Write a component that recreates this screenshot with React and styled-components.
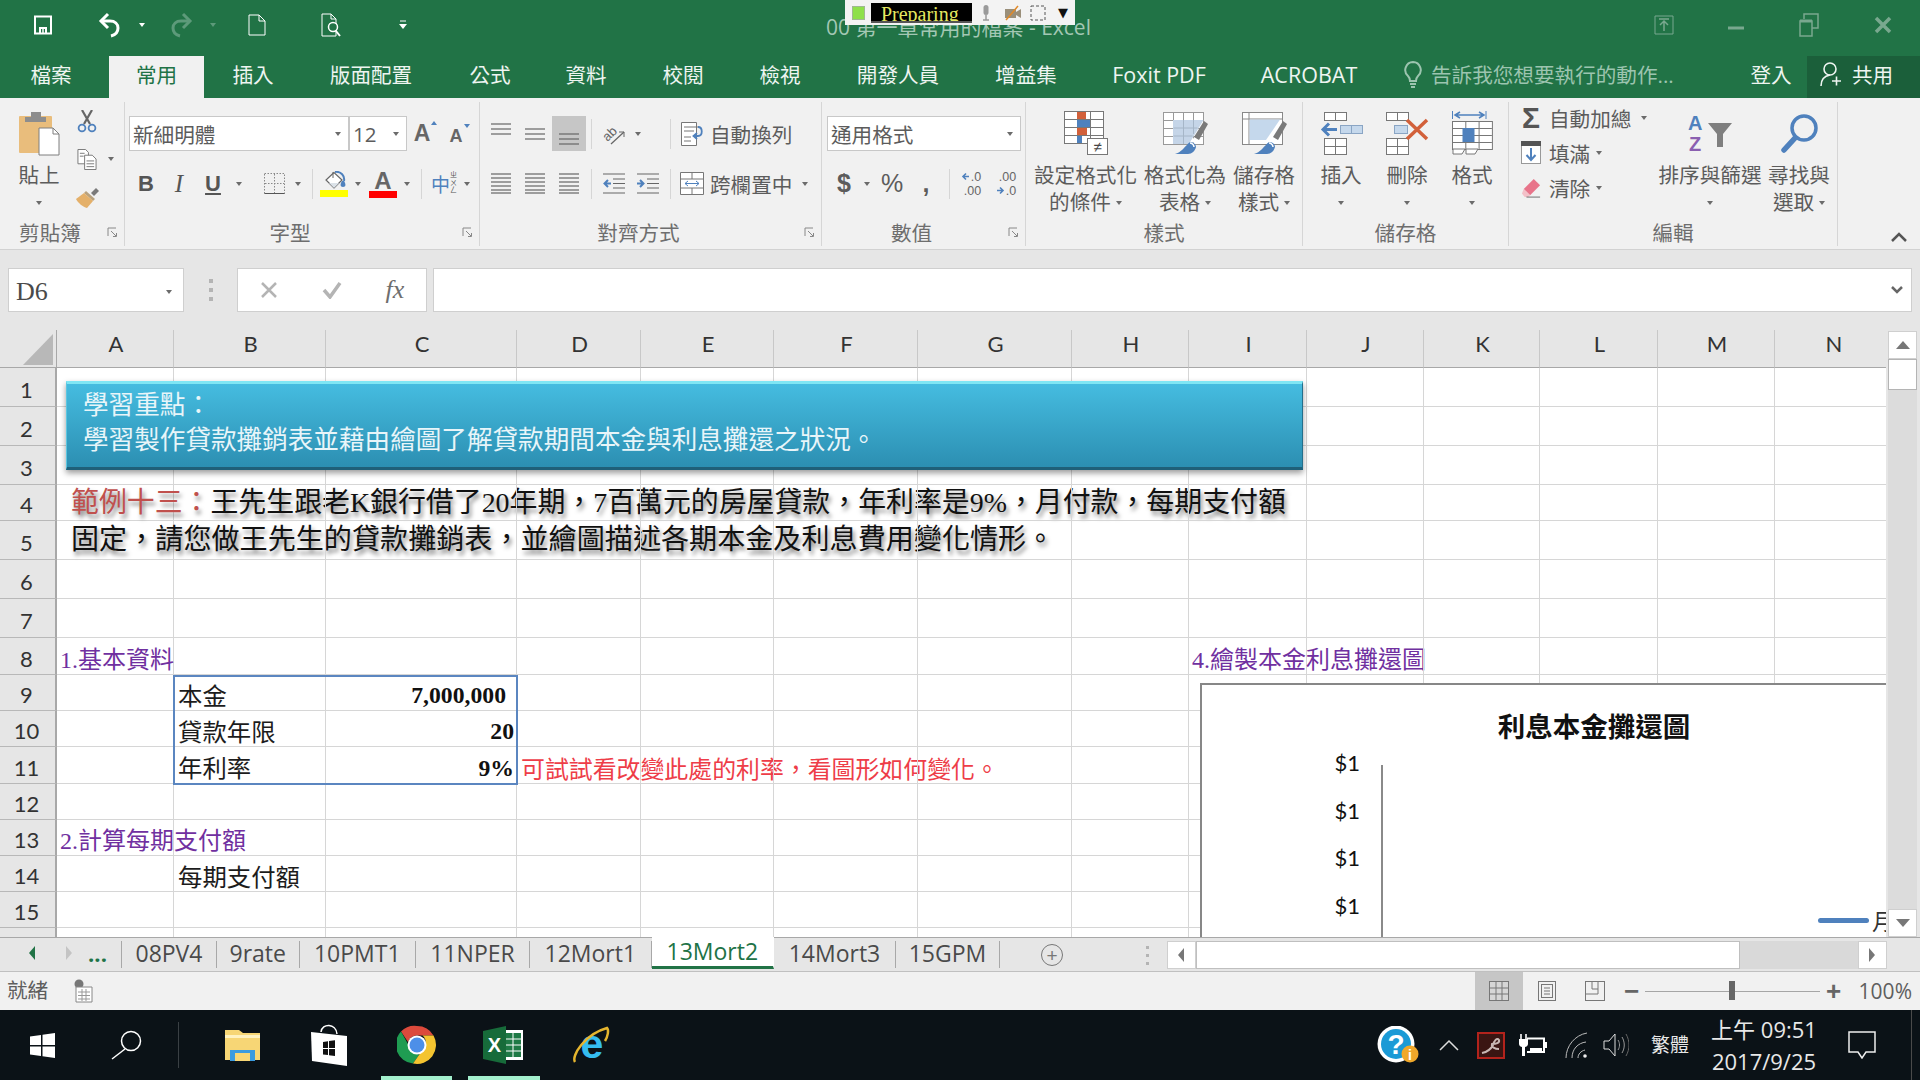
import React from "react";
import styled, { createGlobalStyle, css } from "styled-components";

const UI = '"Open Sans","Noto Sans CJK TC",sans-serif';
const CELL = '"Liberation Serif","Noto Sans CJK TC",serif';
const CALIBRI = 'Lato,"Noto Sans CJK TC",sans-serif';
const BLUE = "#4f81bd";
const ORANGE = "#d2603a";

const COL_NAMES = "ABCDEFGHIJKLMN".split("");
const COL_W = [117, 152, 191, 124, 133, 144, 154, 117, 118, 117, 116, 118, 117, 117];
const ROW_H = [39, 39, 39, 36, 39, 39, 39, 37, 36, 36, 37, 36, 36, 36, 36, 36];

const GlobalStyle = createGlobalStyle`
  html, body { margin: 0; padding: 0; width: 1920px; height: 1080px; overflow: hidden; }
  body { font-family: ${UI}; background: #f1f1f1; }
  * { box-sizing: border-box; }
  svg { display: block; }
`;

const Page = styled.div`
  width: 1920px;
  height: 1080px;
  position: relative;
  overflow: hidden;
`;

/* title bar */
const TitleBar = styled.div`
  height: 56px;
  background: #217346;
  display: flex;
  align-items: flex-start;
`;
const BarSlot = styled.div`
  width: ${(p) => p.$w}px;
  height: 50px;
  margin-left: ${(p) => p.$ml || 0}px;
  display: flex;
  align-items: center;
  justify-content: center;
  flex: none;
`;
const WindowTitle = styled.div`
  margin-left: 394px;
  font-size: 21px;
  line-height: 54px;
  color: #a3c7b4;
  white-space: nowrap;
`;
const WindowControls = styled.div`
  margin-left: auto;
  display: flex;
`;
const Recorder = styled.div`
  position: absolute;
  left: 845px;
  top: 0;
  width: 230px;
  height: 25px;
  background: #f3f3f3;
  display: flex;
  align-items: center;
`;
const RecLed = styled.i`
  width: 13px;
  height: 14px;
  margin-left: 7px;
  background: #8ee04a;
  border: 1px solid #9fb890;
`;
const RecStatus = styled.div`
  margin-left: 6px;
  width: 102px;
  height: 20px;
  background: #000;
  color: #e4e860;
  font: 20px/20px "Liberation Serif", serif;
  padding: 1px 0 0 10px;
  overflow: hidden;
  border-bottom: 2px solid #555;
`;
const RecTool = styled.div`
  width: ${(p) => p.$w}px;
  display: flex;
  justify-content: center;
  font: 13px/1 "DejaVu Sans", sans-serif;
  color: #111;
`;

/* tabs */
const TabRow = styled.div`
  height: 42px;
  background: #217346;
  display: flex;
`;
const Tab = styled.div`
  width: ${(p) => p.$w}px;
  margin-right: ${(p) => p.$mr || 0}px;
  padding-bottom: 6px;
  display: flex;
  align-items: center;
  justify-content: center;
  font-size: ${(p) => (p.$latin ? 21.5 : 20.6)}px;
  white-space: nowrap;
  color: ${(p) => (p.$on ? "#217346" : "#eef5f1")};
  background: ${(p) => (p.$on ? "#f1f1f1" : "transparent")};
`;
const TellMe = styled.div`
  width: 359px;
  padding: 0 0 6px 21px;
  display: flex;
  align-items: center;
  gap: 8px;
  font-size: 20.6px;
  color: #9cc4af;
  white-space: nowrap;
`;
const SignIn = styled(Tab)`
  width: 60px;
  margin-right: 6px;
`;
const Share = styled.div`
  width: 113px;
  background: #1b5f3a;
  display: flex;
  align-items: center;
  padding: 0 0 6px 12px;
  gap: 9px;
  font-size: 20.6px;
  color: #eef5f1;
`;

/* ribbon */
const Ribbon = styled.div`
  height: 152px;
  background: #f1f1f1;
  border-bottom: 1px solid #d2d2d2;
  display: flex;
  align-items: flex-start;
  font-size: 20.6px;
  color: #5c5c5c;
  position: relative;
`;
const Group = styled.div`
  width: ${(p) => p.$w}px;
  height: 144px;
  margin-top: 4px;
  border-right: 1px solid #d6d6d6;
  display: flex;
  flex-direction: column;
  flex: none;
`;
const GroupBody = styled.div`
  height: 114px;
  flex: none;
  display: ${(p) => (p.$row ? "flex" : "block")};
`;
const GroupFoot = styled.div`
  flex: 1;
  display: flex;
  align-items: center;
  padding-top: 1px;
  color: #6e6e6e;
  font-size: 20.6px;
`;
const FootLabel = styled.div`
  flex: 1;
  text-align: center;
`;
const Launcher = styled.div`
  width: 24px;
  display: flex;
  justify-content: center;
`;
const ToolRow = styled.div`
  height: 35px;
  margin-top: 14px;
  padding-left: ${(p) => p.$pl || 0}px;
  display: flex;
  align-items: center;
  & + & {
    margin-top: 15px;
  }
`;
const Slot = styled.div`
  width: ${(p) => p.$w}px;
  height: 35px;
  margin-left: ${(p) => p.$ml || 0}px;
  flex: none;
  display: flex;
  align-items: center;
  justify-content: center;
  background: ${(p) => (p.$on ? "#c6c6c6" : "transparent")};
`;
const Caret = styled.i`
  display: block;
  flex: none;
  width: 0;
  height: 0;
  margin-left: ${(p) => p.$ml || 0}px;
  border-left: 3.5px solid transparent;
  border-right: 3.5px solid transparent;
  border-top: 4px solid ${(p) => p.$c || "#6b6b6b"};
`;
const Sep = styled.div`
  width: 1px;
  height: 30px;
  background: #d6d6d6;
`;
const ComboBox = styled.div`
  width: ${(p) => p.$w}px;
  height: 35px;
  background: #fff;
  border: 1px solid #c8c8c8;
  display: flex;
  align-items: center;
  justify-content: space-between;
  padding: 0 7px 0 3px;
  flex: none;
  font-size: 20.6px;
  color: #5c5c5c;
`;
const Letter = styled.span`
  font: ${(p) => (p.$i ? "italic 400" : "700")} ${(p) => p.$s || 22}px ${(p) => (p.$i ? '"Liberation Serif"' : '"Liberation Sans"')}, sans-serif;
  color: #555;
  text-decoration: ${(p) => (p.$u ? "underline" : "none")};
  text-underline-offset: 2px;
`;
const SizeLetter = styled.span`
  position: relative;
  top: ${(p) => p.$top || 0}px;
  font: 700 ${(p) => p.$s}px/1 "Liberation Sans", sans-serif;
  color: #666;
`;
const LetterMark = styled.i`
  position: absolute;
  top: ${(p) => (p.$up ? -1 : -3)}px;
  right: -7px;
  border-left: 3.5px solid transparent;
  border-right: 3.5px solid transparent;
  ${(p) => (p.$up ? `border-bottom: 4px solid ${BLUE};` : `border-top: 4px solid ${BLUE};`)}
`;
const ColorTool = styled.div`
  width: 28px;
  display: flex;
  flex-direction: column;
  align-items: center;
`;
const ColorBar = styled.div`
  width: 28px;
  height: 7px;
  background: ${(p) => p.$c};
`;
const ColorLetter = styled.span`
  font: 700 24px/21px "Liberation Sans", sans-serif;
  color: #666;
`;
const PhoneticMain = styled.span`
  font-size: 19px;
  color: ${BLUE};
  line-height: 1;
  margin-top: 4px;
`;
const PhoneticSmall = styled.span`
  font-size: 7px;
  line-height: 7.5px;
  color: #555;
  width: 7px;
  word-break: break-all;
  margin-top: -2px;
`;
const ToolText = styled.span`
  margin-left: ${(p) => p.$ml || 0}px;
  white-space: nowrap;
`;
const NumberGlyph = styled.span`
  font: ${(p) => (p.$b ? "700" : "400")} ${(p) => p.$s || 25}px "Liberation Sans", sans-serif;
  color: #5c5c5c;
`;
const DecimalIcon = styled.div`
  font: 12.5px/14px "Liberation Sans", sans-serif;
  color: #666;
  white-space: nowrap;
  display: flex;
  flex-direction: column;
  align-items: flex-end;
`;
const DecimalLine = styled.span`
  display: flex;
  align-items: center;
  gap: 1px;
`;
const ClipCol = styled.div`
  width: ${(p) => p.$w}px;
  display: flex;
  flex-direction: column;
  align-items: center;
  flex: none;
`;
const PasteIcon = styled.div`
  margin-top: 9px;
`;
const BigLabel = styled.div`
  line-height: 27px;
  margin-top: ${(p) => p.$mt || 0}px;
  white-space: nowrap;
  height: 27px;
  display: flex;
  align-items: center;
  gap: 5px;
`;
const ClipRow = styled.div`
  height: 38px;
  display: flex;
  align-items: center;
  width: 100%;
`;
const BigButton = styled.div`
  width: ${(p) => p.$w}px;
  padding-top: 7px;
  display: flex;
  flex-direction: column;
  align-items: center;
  flex: none;
`;
const BigIcon = styled.div`
  height: 48px;
  margin-bottom: 5px;
  display: flex;
  align-items: center;
  justify-content: center;
`;
const SmallStack = styled.div`
  width: 156px;
  flex: none;
`;
const SmallButton = styled.div`
  height: 35px;
  display: flex;
  align-items: center;
  padding-left: 12px;
  white-space: nowrap;
  &:first-child {
    margin-top: -2px;
  }
`;
const SmallIcon = styled.div`
  width: 20px;
  display: flex;
  justify-content: center;
  margin-right: 8px;
`;
const Sigma = styled.span`
  font: bold 30px/1 "Liberation Sans", sans-serif;
  color: #555;
`;
const Collapse = styled.div`
  position: absolute;
  right: 12px;
  bottom: 6px;
`;

/* formula bar */
const FormulaBar = styled.div`
  height: 80px;
  background: #e6e6e6;
  display: flex;
  align-items: flex-start;
  padding: 18px 8px 0 8px;
`;
const NameBox = styled.div`
  width: 176px;
  height: 44px;
  background: #fff;
  border: 1px solid #cfcfcf;
  display: flex;
  align-items: center;
  justify-content: space-between;
  padding: 4px 11px 0 7px;
  font: 26px "Liberation Serif", serif;
  color: #4a4a4a;
`;
const GripDots = styled.div`
  width: 53px;
  height: 44px;
  display: flex;
  flex-direction: column;
  align-items: center;
  justify-content: center;
  gap: 5px;
  i {
    width: 4px;
    height: 4px;
    background: #b4b4b4;
  }
`;
const FxBox = styled.div`
  width: 190px;
  height: 44px;
  background: #fff;
  border: 1px solid #cfcfcf;
  display: flex;
  align-items: center;
`;
const FxSlot = styled.div`
  width: ${(p) => p.$w}px;
  display: flex;
  justify-content: center;
`;
const FxText = styled.span`
  font: italic 26px "Liberation Serif", serif;
  color: #6e6e6e;
`;
const FormulaInput = styled.div`
  flex: 1;
  height: 44px;
  margin-left: 6px;
  background: #fff;
  border: 1px solid #cfcfcf;
  display: flex;
  align-items: center;
  justify-content: flex-end;
  padding-right: 8px;
`;

/* sheet */
const SheetRow = styled.div`
  height: 607px;
  display: flex;
`;
const Sheet = styled.div`
  width: 1886px;
  height: 607px;
  position: relative;
  overflow: hidden;
  background: #fff;
  display: grid;
  grid-template-columns: 57px ${COL_W.map((w) => `${w}px`).join(" ")};
  grid-template-rows: 38px ${ROW_H.map((h) => `${h}px`).join(" ")};
`;
const Corner = styled.div`
  background: #e6e6e6;
  border-right: 1px solid #a8a8a8;
  border-bottom: 1px solid #a8a8a8;
  display: flex;
  justify-content: flex-end;
  align-items: flex-end;
  padding: 0 3px 2px 0;
`;
const CornerMark = styled.div`
  width: 30px;
  height: 31px;
  background: #b8b8b8;
  clip-path: polygon(100% 0, 100% 100%, 0 100%);
`;
const ColHead = styled.div`
  background: #e6e6e6;
  border-right: 1px solid #c8c8c8;
  border-bottom: 1px solid #a8a8a8;
  font: 22px/28px ${CALIBRI};
  color: #333;
  text-align: center;
  padding: 0 0 10px 2px;
`;
const RowHead = styled.div`
  background: #e6e6e6;
  border-right: 2px solid #a8a8a8;
  border-bottom: 1px solid #b8b8b8;
  font: 22px/1 ${CALIBRI};
  color: #333;
  display: flex;
  align-items: center;
  justify-content: center;
  padding: 5px 2px 0 0;
`;
const kinds = {
  plain: css`
    padding-left: 4px;
    padding-top: 9px;
    font-size: 24.4px;
    color: #1c1c1c;
  `,
  purple: css`
    padding-left: 3px;
    padding-top: 7px;
    font-size: 24px;
    color: #7030a0;
  `,
  note: css`
    padding-left: 4px;
    padding-top: 11px;
    font-size: 23.9px;
    color: #ee3d48;
  `,
  value: css`
    justify-content: flex-end;
    padding-right: ${(p) => p.$pr || 2}px;
    padding-top: 7px;
    font-weight: 700;
    font-size: 23.7px;
    color: #111;
  `,
  example: css`
    padding-left: 14px;
    font-size: 27.9px;
    color: #111;
    text-shadow: 2px 4px 4px rgba(0, 0, 0, 0.5);
  `,
  exampleWide: css`
    padding-left: 14px;
    font-size: 28.1px;
    color: #111;
    text-shadow: 2px 4px 4px rgba(0, 0, 0, 0.5);
  `,
};
const Cell = styled.div`
  border-right: 1px solid #d6d6d6;
  border-bottom: 1px solid #d6d6d6;
  font-family: ${CELL};
  line-height: 1;
  white-space: nowrap;
  display: flex;
  align-items: center;
  min-width: 0;
  min-height: 0;
  ${(p) => p.$kind && kinds[p.$kind]}
`;
const Red = styled.span`
  color: #c0504d;
`;
const Banner = styled.div`
  position: absolute;
  left: 66px;
  top: 51px;
  width: 1237px;
  height: 89px;
  padding: 4px 0 0 16px;
  background: linear-gradient(#45bce0, #2c8fb2);
  border-top: 3px solid #7fe6f4;
  border-bottom: 3px solid #1f6079;
  border-left: 1px solid #5cc6e0;
  border-right: 1px solid #236f8c;
  box-shadow: 0 3px 6px rgba(0, 0, 0, 0.4);
  font: 25.6px/35px ${CELL};
  color: #e8f5f9;
  white-space: nowrap;
`;
const Picked = styled.div`
  position: absolute;
  left: 173px;
  top: 345px;
  width: 345px;
  height: 110px;
  border: 2px solid #5b86c0;
`;
const Chart = styled.div`
  position: absolute;
  left: 1200px;
  top: 353px;
  width: 788px;
  height: 400px;
  background: #fff;
  border: 2px solid #878787;
`;
const ChartTitle = styled.div`
  padding-top: 20px;
  height: 61px;
  text-align: center;
  font: bold 27.5px/40px "Noto Sans CJK TC", sans-serif;
  color: #111;
`;
const Plot = styled.div`
  display: flex;
`;
const AxisLabels = styled.div`
  width: 158px;
  display: flex;
  flex-direction: column;
  gap: 13.5px;
  text-align: right;
  font: 22px/34px ${CALIBRI};
  color: #111;
`;
const Axis = styled.div`
  width: 2px;
  height: 300px;
  margin: 19px 0 0 21px;
  background: #8a8a8a;
`;
const Legend = styled.div`
  position: absolute;
  left: 616px;
  top: 218px;
  display: flex;
  align-items: center;
  gap: 3px;
  font: 23px "Noto Sans CJK TC", sans-serif;
  color: #333;
`;
const LegendLine = styled.i`
  width: 51px;
  height: 5px;
  border-radius: 3px;
  background: ${BLUE};
`;

/* scrollbars */
const VScroll = styled.div`
  flex: 1;
  background: #e6e6e6;
  padding: 1px 3px 0 2px;
  display: flex;
  flex-direction: column;
`;
const ScrollBtn = styled.div`
  width: ${(p) => p.$w || 29}px;
  height: ${(p) => p.$h || 28}px;
  background: #fff;
  border: 1px solid #cfcfcf;
  display: flex;
  align-items: center;
  justify-content: center;
  flex: none;
`;
const VThumb = styled.div`
  height: 31px;
  background: #fff;
  border: 1px solid #b4b4b4;
  flex: none;
`;
const VTrack = styled.div`
  flex: 1;
  background: #dcdcdc;
`;
const Filler = styled.div`
  flex: 1;
`;
const Arrow = styled.i`
  display: block;
  ${(p) =>
    p.$d === "up" &&
    css`
      border-left: 7px solid transparent;
      border-right: 7px solid transparent;
      border-bottom: 8px solid ${p.$c || "#777"};
    `}
  ${(p) =>
    p.$d === "down" &&
    css`
      border-left: 7px solid transparent;
      border-right: 7px solid transparent;
      border-top: 8px solid ${p.$c || "#777"};
    `}
  ${(p) =>
    p.$d === "left" &&
    css`
      border-top: 7px solid transparent;
      border-bottom: 7px solid transparent;
      border-right: 6px solid ${p.$c || "#777"};
    `}
  ${(p) =>
    p.$d === "right" &&
    css`
      border-top: 7px solid transparent;
      border-bottom: 7px solid transparent;
      border-left: 6px solid ${p.$c || "#777"};
    `}
`;

/* sheet tabs */
const TabStrip = styled.div`
  height: 35px;
  background: #e6e6e6;
  border-top: 1px solid #a8a8a8;
  border-bottom: 1px solid #c0c0c0;
  display: flex;
  align-items: flex-start;
`;
const NavSlot = styled.div`
  width: ${(p) => p.$w}px;
  height: 30px;
  display: flex;
  align-items: center;
  justify-content: center;
  color: #217346;
  font: bold 22px/1 ${UI};
`;
const SheetTab = styled.div`
  width: ${(p) => p.$w}px;
  flex: none;
  height: ${(p) => (p.$on ? 32 : 27)}px;
  margin-top: ${(p) => (p.$on ? -1 : 3)}px;
  border-right: 1px solid ${(p) => (p.$on ? "transparent" : "#a8a8a8")};
  border-left: ${(p) => (p.$first ? "1px solid #a8a8a8" : "none")};
  background: ${(p) => (p.$on ? "#fff" : "transparent")};
  border-bottom: ${(p) => (p.$on ? "3px solid #217346" : "none")};
  color: ${(p) => (p.$on ? "#217346" : "#4a4a4a")};
  font-size: 23px;
  line-height: 1;
  display: flex;
  align-items: ${(p) => (p.$on ? "flex-start" : "center")};
  padding-top: ${(p) => (p.$on ? 3 : 0)}px;
  padding-bottom: ${(p) => (p.$on ? 0 : 2)}px;
  justify-content: center;
  white-space: nowrap;
`;
const AddSheet = styled.div`
  margin-left: 41px;
  margin-top: 6px;
  width: 22px;
  height: 22px;
  border: 1px solid #777;
  border-radius: 50%;
  color: #777;
  display: flex;
  align-items: center;
  justify-content: center;
  font: 19px/1 "Liberation Sans", sans-serif;
  flex: none;
`;
const TabGrip = styled(GripDots)`
  width: 8px;
  height: 28px;
  margin: 3px 0 0 81px;
  flex: none;
  i {
    width: 3px;
    height: 3px;
  }
`;
const HScroll = styled.div`
  width: 720px;
  height: 28px;
  margin: 3px 0 0 15px;
  background: #d9d9d9;
  display: flex;
  flex: none;
`;
const HThumb = styled.div`
  width: 544px;
  height: 28px;
  background: #fff;
  border: 1px solid #bfbfbf;
`;

/* status bar */
const StatusBar = styled.div`
  height: 38px;
  background: #f1f1f1;
  display: flex;
  align-items: center;
  padding-left: 7px;
  font-size: 20.6px;
  color: #5e5e5e;
`;
const StatusLabel = styled.span`
  margin-top: -4px;
`;
const StatusRight = styled.div`
  margin-left: auto;
  height: 38px;
  display: flex;
  align-items: center;
`;
const ViewBtn = styled.div`
  width: 48px;
  height: 38px;
  display: flex;
  align-items: center;
  justify-content: center;
  background: ${(p) => (p.$on ? "#c6c6c6" : "transparent")};
`;
const ZoomSign = styled.div`
  width: ${(p) => p.$w}px;
  text-align: center;
  font: bold 26px/1 "Liberation Sans", sans-serif;
  color: #666;
`;
const ZoomTrack = styled.div`
  width: 175px;
  height: 20px;
  display: flex;
  justify-content: center;
  background: linear-gradient(#a6a6a6, #a6a6a6) center / 100% 1px no-repeat;
`;
const ZoomThumb = styled.i`
  width: 6px;
  height: 19px;
  background: #666;
`;
const ZoomText = styled.div`
  margin: 0 8px 0 11px;
  font-size: 21px;
  white-space: nowrap;
`;

/* taskbar */
const Taskbar = styled.div`
  height: 70px;
  background: #0b1217;
  display: flex;
  align-items: center;
  color: #eee;
`;
const TaskItem = styled.div`
  position: relative;
  width: ${(p) => p.$w || 72}px;
  height: 70px;
  margin-left: ${(p) => p.$ml || 0}px;
  display: flex;
  align-items: center;
  justify-content: center;
  flex: none;
  ${(p) =>
    p.$on &&
    css`
      &::after {
        content: "";
        position: absolute;
        left: 0;
        right: 0;
        bottom: 0;
        height: 4px;
        background: #a3f0cd;
      }
    `}
`;
const TaskSep = styled.div`
  width: 1px;
  height: 46px;
  margin: 0 27px 0 10px;
  background: #3a4044;
`;
const Tray = styled.div`
  margin-left: auto;
  margin-right: 22px;
  display: flex;
`;
const TrayText = styled.div`
  font-size: 19px;
  line-height: 24px;
  text-align: center;
  white-space: nowrap;
  color: #e8e8e8;
`;
const Clock = styled.div`
  display: flex;
  flex-direction: column;
  align-items: center;
  gap: 4px;
  font-size: 22px;
  line-height: 28px;
  color: #e8e8e8;
  white-space: nowrap;
`;
const EdgeLine = styled.div`
  position: absolute;
  right: 8px;
  bottom: 0;
  height: 70px;
  width: 1px;
  background: #4a4a4a;
`;

/* drawings */
const Ico = ({ w, h, children }) => (
  <svg width={w} height={h} viewBox={`0 0 ${w} ${h}`} fill="none">
    {children}
  </svg>
);

const SaveIcon = () => (
  <Ico w={20} h={20}>
    <path d="M2 1.500h16v17H2z" stroke="#fff" strokeWidth="2" />
    <path d="M7 18v-5h6v5" stroke="#fff" strokeWidth="2" />
    <path d="M10 14v4" stroke="#fff" strokeWidth="1.500" />
  </Ico>
);
const UndoIcon = ({ c = "#fff" }) => (
  <Ico w={24} h={26}>
    <path d="M10 2 3 9l7 7" stroke={c} strokeWidth="3" />
    <path d="M4 9h8c5 0 8 3 8 7s-3 7-7 8" stroke={c} strokeWidth="3" />
  </Ico>
);
const RedoIcon = ({ c }) => (
  <Ico w={24} h={26}>
    <path d="m14 2 7 7-7 7" stroke={c} strokeWidth="3" />
    <path d="M20 9h-8c-5 0-8 3-8 7s3 7 7 8" stroke={c} strokeWidth="3" />
  </Ico>
);
const NewIcon = () => (
  <Ico w={18} h={22}>
    <path d="M1 1h10l6 6v14H1z" stroke="#fff" />
    <path d="M11 1v6h6" stroke="#fff" />
  </Ico>
);
const PreviewIcon = () => (
  <Ico w={24} h={24}>
    <path d="M2 1h9l5 5v17H2z" stroke="#fff" />
    <path d="M11 1v5h5" stroke="#fff" />
    <circle cx="13" cy="14" r="4.500" stroke="#fff" strokeWidth="1.500" fill="#217346" />
    <path d="m16 18 4 5" stroke="#fff" strokeWidth="2" />
  </Ico>
);
const QatMore = () => (
  <Ico w={10} h={12}>
    <path d="M2 2h6" stroke="#fff" />
    <path d="M1 5h8L5 10z" fill="#fff" />
  </Ico>
);
const RibbonOptIcon = () => (
  <Ico w={20} h={20}>
    <path d="M1 1h18v18H1z" stroke="#79a88f" />
    <path d="M5 4h10M10 6v10M6 10l4-4 4 4" stroke="#79a88f" strokeWidth="1.500" />
  </Ico>
);
const MinIcon = () => (
  <Ico w={18} h={18}>
    <path d="M1 12h16" stroke="#79a88f" strokeWidth="3" />
  </Ico>
);
const RestoreIcon = () => (
  <Ico w={20} h={24}>
    <path d="M5 6V1h14v14h-6" stroke="#79a88f" strokeWidth="1.500" />
    <path d="M1 8h12v15H1z" stroke="#79a88f" strokeWidth="1.500" />
    <path d="M1 8h12" stroke="#79a88f" strokeWidth="3" />
  </Ico>
);
const CloseIcon = () => (
  <Ico w={18} h={18}>
    <path d="m2 2 14 14M16 2 2 16" stroke="#79a88f" strokeWidth="3.500" />
  </Ico>
);
const MicIcon = () => (
  <Ico w={10} h={17}>
    <rect x="2.500" y="1" width="5" height="10" rx="2.500" fill="#9a9a9a" />
    <path d="M5 11v5M2 16h6" stroke="#9a9a9a" strokeWidth="1.500" />
  </Ico>
);
const CamIcon = () => (
  <Ico w={18} h={16}>
    <rect x="1" y="4" width="11" height="9" fill="#9a8f7a" />
    <path d="m12 7 5-3v9l-5-3z" fill="#9a8f7a" />
    <path d="m2 15 12-14" stroke="#e08a2a" strokeWidth="1.500" />
  </Ico>
);
const RegionIcon = () => (
  <Ico w={16} h={16}>
    <rect x="1" y="1" width="14" height="14" stroke="#555" strokeDasharray="3 2" />
  </Ico>
);
const BulbIcon = () => (
  <Ico w={20} h={28}>
    <path d="M10 2a8 8 0 0 0-5 14c1 1 2 3 2 5h6c0-2 1-4 2-5a8 8 0 0 0-5-14z" stroke="#9cc4af" strokeWidth="2" />
    <path d="M7 24h6M8 27h4" stroke="#9cc4af" strokeWidth="2" />
  </Ico>
);
const ShareIcon = () => (
  <Ico w={24} h={26}>
    <circle cx="11" cy="8" r="6" stroke="#eef5f1" strokeWidth="1.600" />
    <path d="M2 25c0-6 3-10 9-11" stroke="#eef5f1" strokeWidth="1.600" />
    <path d="M13 20h9M17.500 15.500v9" stroke="#eef5f1" strokeWidth="1.600" />
  </Ico>
);

const PasteGlyph = () => (
  <Ico w={41} h={45}>
    <rect y="5" width="33" height="37" rx="1" fill="#e9bd7c" />
    <path d="M6 6h21v5H6z" fill="#8d8d8d" />
    <path d="M12 1h10v5H12z" fill="#8d8d8d" />
    <path d="M20 17h14l6 6v21H20z" fill="#fff" stroke="#7f7f7f" />
    <path d="M34 17v6h6" stroke="#7f7f7f" />
  </Ico>
);
const ScissorsGlyph = () => (
  <Ico w={20} h={23}>
    <path d="M15 0 7 14M5 0l8 14" stroke="#666" strokeWidth="2.200" />
    <circle cx="5" cy="18" r="3.400" stroke={BLUE} strokeWidth="1.800" />
    <circle cx="15" cy="18" r="3.400" stroke={BLUE} strokeWidth="1.800" />
  </Ico>
);
const CopyGlyph = () => (
  <Ico w={21} h={23}>
    <path d="M1 1h8l3 3v12H1z" fill="#fff" stroke="#777" />
    <path d="M8 7h8l4 4v11H8z" fill="#fff" stroke="#777" />
    <path d="M10 13h8M10 16h8M10 19h8M3 5h5M3 8h4" stroke="#777" />
  </Ico>
);
const BrushGlyph = () => (
  <Ico w={24} h={21}>
    <path d="M16 6 21 1l3 3-5 5z" fill="#7a7a7a" />
    <path d="M11 4l9 8-2 2-9-8z" fill="#b9a27e" />
    <path d="M9 6l9 8-6 7c-4-1-9-5-11-9z" fill="#e4b06a" />
  </Ico>
);
const LauncherGlyph = () => (
  <Ico w={11} h={11}>
    <path d="M1 9V1h8" stroke="#888" />
    <path d="m4 4 5 5M6 9.500h3.500V6" stroke="#888" />
  </Ico>
);
const BorderGlyph = () => (
  <Ico w={21} h={21}>
    <path d="M.5.500h20v20H.5z" stroke="#888" strokeDasharray="1.500 1.500" />
    <path d="M10.500 1v19M1 10.500h19" stroke="#888" strokeDasharray="1.500 1.500" />
    <path d="M.5 20.500h20" stroke="#555" />
  </Ico>
);
const BucketGlyph = () => (
  <Ico w={28} h={19}>
    <path d="M14 1.500 6 9l8 8 8-8z" fill="#fff" stroke="#666" strokeWidth="1.200" />
    <path d="M13 1v6" stroke="#666" />
    <path d="M15 1c6-1 10 4 9 9" stroke={BLUE} strokeWidth="2" />
    <path d="M22 10c-2 3-2 6 1 6s3-3 1-6z" fill={BLUE} />
    <path d="M9 12h10l-5 5z" fill="#dbe2e8" />
  </Ico>
);
const AlignV = ({ y }) => (
  <Ico w={20} h={30}>
    {y.map((v) => (
      <path key={v} d={`M0 ${v}h20`} stroke="#666" strokeWidth="1.200" />
    ))}
  </Ico>
);
const AlignH = () => (
  <Ico w={20} h={21}>
    {[1, 5, 9, 13, 17, 20].map((v) => (
      <path key={v} d={`M0 ${v}h20`} stroke="#666" strokeWidth="1.200" />
    ))}
  </Ico>
);
const OrientGlyph = () => (
  <Ico w={22} h={22}>
    <text x="0" y="16" fontSize="13" fill="#666" transform="rotate(-45 6 12)" fontFamily="Liberation Sans">
      ab
    </text>
    <path d="M8 21 21 9" stroke="#666" strokeWidth="1.200" />
    <path d="M21 9v5M21 9h-5" stroke="#666" />
  </Ico>
);
const IndentGlyph = ({ rev }) => (
  <Ico w={24} h={21}>
    <path d="M1 1h22M1 20h22M11 6h12M11 10.500h12M11 15h12" stroke="#666" strokeWidth="1.200" />
    {rev ? (
      <path d="M9 10.500H3M6 7l-3.500 3.500L6 14" stroke={BLUE} strokeWidth="2" />
    ) : (
      <path d="M1 10.500h6M4 7l3.500 3.500L4 14" stroke={BLUE} strokeWidth="2" />
    )}
  </Ico>
);
const WrapGlyph = () => (
  <Ico w={23} h={24}>
    <path d="M.5.500h15v23H.5z" fill="#fff" stroke="#777" />
    <path d="M3 5h15M3 9h10M3 15h7M3 19h7" stroke="#777" />
    <path d="M17 5c5 0 5 9 0 9h-4M16 11l-3.500 3 3.500 3" stroke={BLUE} strokeWidth="1.800" />
  </Ico>
);
const MergeGlyph = () => (
  <Ico w={24} h={23}>
    <path d="M.5.500h23v22H.5z" fill="#fff" stroke="#777" />
    <path d="M1 7h22M1 16h22M12 1v6M12 16v6" stroke="#777" />
    <path d="M5 11.500h14M8 9l-3 2.500L8 14M16 9l3 2.500L16 14" stroke={BLUE} />
  </Ico>
);
const DecArrow = ({ rev }) => (
  <Ico w={9} h={9}>
    {rev ? (
      <path d="M8 4.500H2M5 1.500l-3 3 3 3" stroke={BLUE} strokeWidth="1.600" />
    ) : (
      <path d="M1 4.500h6M4 1.500l3 3-3 3" stroke={BLUE} strokeWidth="1.600" />
    )}
  </Ico>
);
const GridLines = ({ x0, y0, cols, rows, cw, ch, c = "#777", fill = "#fff" }) => (
  <g>
    <rect x={x0 + 0.5} y={y0 + 0.5} width={cols * cw} height={rows * ch} fill={fill} stroke={c} />
    {Array.from({ length: cols - 1 }, (_, i) => (
      <path key={`c${i}`} d={`M${x0 + 0.5 + (i + 1) * cw} ${y0}v${rows * ch}`} stroke={c} />
    ))}
    {Array.from({ length: rows - 1 }, (_, i) => (
      <path key={`r${i}`} d={`M${x0} ${y0 + 0.5 + (i + 1) * ch}h${cols * cw}`} stroke={c} />
    ))}
  </g>
);
const CondGlyph = () => (
  <Ico w={44} h={44}>
    <GridLines x0={0} y0={0} cols={3} rows={4} cw={13} ch={8} />
    <rect x="13" y="1" width="9" height="7" fill={ORANGE} />
    <rect x="13" y="9" width="13" height="7" fill={BLUE} />
    <rect x="13" y="17" width="10" height="7" fill={ORANGE} />
    <rect x="13" y="25" width="5" height="7" fill={BLUE} />
    <rect x="23.500" y="27.500" width="20" height="16" fill="#fff" stroke="#777" />
    <text x="33.500" y="41" fontSize="15" textAnchor="middle" fill="#444" fontFamily="Liberation Sans">
      ≠
    </text>
  </Ico>
);
const PaintBrush = () => (
  <g>
    <path d="M45 12 36 28l-5-3L41 9z" fill="#7a7a7a" />
    <path d="M30 26l5 3-2 3-5-3z" fill="#fff" />
    <path d="M12 42c6-1 10-8 15-12 3 0 6 2 6 5-1 4-4 7-8 7z" fill={BLUE} />
    <path d="M27 31c2 0 4 2 4 4" stroke="#fff" strokeWidth="1.500" />
  </g>
);
const TableGlyph = () => (
  <Ico w={45} h={42}>
    <GridLines x0={0} y0={0} cols={4} rows={4} cw={10} ch={8} c="#999" />
    <path d="M10 8h30.500L26 32H10z" fill="#c5d5e8" />
    <path d="M10.500 16h24M10.500 24h19M20.500 8v24M30.500 8v14" stroke="#a6b6c8" />
    <PaintBrush />
  </Ico>
);
const CellStyleGlyph = () => (
  <Ico w={45} h={42}>
    <rect x=".5" y=".500" width="40" height="32" fill="#fff" stroke="#888" />
    <path d="M1 7h40M7 1v32" stroke="#888" />
    <path d="M7.500 7.500H38L24 28H7.500z" fill="#c5d8ec" />
    <PaintBrush />
  </Ico>
);
const InsertGlyph = () => (
  <Ico w={43} h={43}>
    <GridLines x0={4} y0={0} cols={2} rows={1} cw={11} ch={8} />
    <GridLines x0={20} y0={13} cols={2} rows={1} cw={11} ch={8} fill="#c5d8ec" c="#8aa5c4" />
    <path d="M17 17.500H3M9 11.500l-6 6 6 6" stroke={BLUE} strokeWidth="3" />
    <GridLines x0={4} y0={26} cols={2} rows={2} cw={11} ch={8} />
  </Ico>
);
const DeleteGlyph = () => (
  <Ico w={43} h={43}>
    <GridLines x0={0} y0={0} cols={2} rows={1} cw={11} ch={8} />
    <rect x="8.500" y="13.500" width="13" height="8" fill="#c5d8ec" stroke="#8aa5c4" />
    <GridLines x0={0} y0={26} cols={2} rows={2} cw={11} ch={8} />
    <path d="m21 8 20 19M41 8 21 27" stroke={ORANGE} strokeWidth="3.500" />
  </Ico>
);
const FormatGlyph = () => (
  <Ico w={41} h={45}>
    <path d="M.5 0v8M34 0v8" stroke={BLUE} />
    <path d="M3 4h29M8 1 3 4l5 3M27 1l5 3-5 3" stroke={BLUE} strokeWidth="1.500" />
    <GridLines x0={0} y0={10} cols={3} rows={4} cw={13.300} ch={7} />
    <rect x="10.500" y="17" width="12" height="14" fill={BLUE} />
    <path d="M1 38h12l-3 5H1zM14 38h12l-3 5h-9z" fill="#fff" stroke="#777" />
  </Ico>
);
const SortGlyph = () => (
  <Ico w={44} h={40}>
    <text x="0" y="17" fontSize="20" fontWeight="700" fill={BLUE} fontFamily="Liberation Sans">
      A
    </text>
    <text x="1" y="38" fontSize="20" fontWeight="700" fill="#8a5fb0" fontFamily="Liberation Sans">
      Z
    </text>
    <path d="M20 10h24L35 21v13h-6V21z" fill="#7f7f7f" />
  </Ico>
);
const FindGlyph = () => (
  <Ico w={40} h={40}>
    <circle cx="25" cy="15" r="12" stroke={BLUE} strokeWidth="3.500" />
    <path d="M16 25 5 37" stroke={BLUE} strokeWidth="5.500" strokeLinecap="round" />
  </Ico>
);
const FillGlyph = () => (
  <Ico w={20} h={23}>
    <rect x=".5" y=".500" width="19" height="22" fill="#fff" stroke="#999" />
    <rect width="20" height="5" fill="#555" />
    <path d="M10 7v12M5.500 14l4.500 5 4.500-5" stroke={BLUE} strokeWidth="2" />
  </Ico>
);
const EraserGlyph = () => (
  <Ico w={22} h={22}>
    <path d="M14 1 21 8 10 19 3 12z" fill="#e8748a" />
    <path d="M3 12l7 7-2 2H4l-3-4z" fill="#f3c0c8" />
    <path d="M6 21h15" stroke="#666" />
  </Ico>
);
const CollapseGlyph = () => (
  <Ico w={18} h={12}>
    <path d="m2 10 7-7 7 7" stroke="#555" strokeWidth="2.500" />
  </Ico>
);
const FormulaChevron = () => (
  <Ico w={12} h={8}>
    <path d="m1 1 5 5 5-5" stroke="#666" strokeWidth="2.500" />
  </Ico>
);
const CrossGlyph = () => (
  <Ico w={18} h={18}>
    <path d="m2 2 14 14M16 2 2 16" stroke="#b4b4b4" strokeWidth="2.500" />
  </Ico>
);
const CheckGlyph = () => (
  <Ico w={20} h={18}>
    <path d="m2 9 6 7L18 2" stroke="#b4b4b4" strokeWidth="3.500" />
  </Ico>
);
const MacroGlyph = () => (
  <Ico w={20} h={24}>
    <circle cx="6" cy="5" r="4.500" fill="#777" />
    <path d="M3 8h16v15H3z" fill="#fff" stroke="#888" />
    <path d="M5 13h12M5 16.500h12M5 20h12M9 10v12M13 10v12" stroke="#999" />
  </Ico>
);
const NormalView = () => (
  <Ico w={20} h={20}>
    <rect x=".5" y=".500" width="19" height="19" fill="#d6d6d6" stroke="#777" />
    <path d="M7 0v20M13 0v20M0 7h20M0 13h20" stroke="#777" />
  </Ico>
);
const LayoutView = () => (
  <Ico w={18} h={20}>
    <rect x=".5" y=".500" width="17" height="19" stroke="#777" />
    <rect x="3.500" y="3.500" width="11" height="13" stroke="#777" />
    <path d="M6 7h6M6 10h6M6 13h6" stroke="#777" />
  </Ico>
);
const BreakView = () => (
  <Ico w={20} h={20}>
    <rect x=".5" y=".500" width="19" height="19" stroke="#777" />
    <path d="M1 13h12V1" stroke="#777" />
    <path d="M7 1v7h6" stroke="#777" />
  </Ico>
);

const WinLogo = () => (
  <Ico w={25} h={25}>
    <path d="M0 3.500 11 2v10H0zM12.500 1.800 25 0v12H12.500zM0 13.500h11v9.500L0 21.500zM12.500 13.500H25V25l-12.500-1.800z" fill="#fff" />
  </Ico>
);
const SearchGlyph = () => (
  <Ico w={32} h={30}>
    <circle cx="21" cy="11" r="9.500" stroke="#fff" strokeWidth="1.500" />
    <path d="m15 19-13 10" stroke="#fff" strokeWidth="1.500" />
  </Ico>
);
const FolderGlyph = () => (
  <Ico w={37} h={32}>
    <path d="M1 1h14l4 3h17v27H1z" fill="#f7d675" />
    <path d="M1 6h35v3H1z" fill="#fff2c0" />
    <path d="M6 21h25v11H26v-6H11v6H6z" fill="#3a9be0" />
    <rect x="11" y="24" width="15" height="8" fill="#f7d675" />
  </Ico>
);
const StoreGlyph = () => (
  <Ico w={38} h={42}>
    <path d="M11 8c1-9 15-9 16 2" stroke="#fff" strokeWidth="1.500" />
    <path d="M1 8 37 12v30L2 37z" fill="#fff" />
    <path d="M13 18l5-.7V24h-5zM19 17.100l6-.8V24h-6zM13 25h5v6l-5-.6zM19 25h6v7l-6-.7z" fill="#111" />
  </Ico>
);
const ChromeGlyph = () => (
  <Ico w={40} h={40}>
    <path d="M20 1a19 19 0 0 1 16.500 9.500H20a9.500 9.500 0 0 0-9 6.500L4 6.500A19 19 0 0 1 20 1z" fill="#dc4a3c" />
    <path d="M4 6.500 11.500 20a9.500 9.500 0 0 0 11 9.200L16 38.600A19 19 0 0 1 4 6.500z" fill="#1f9c52" />
    <path d="M36.500 10.500a19 19 0 0 1-20.500 28L25.500 25a9.500 9.500 0 0 0 0-14.500z" fill="#f4c430" />
    <circle cx="20" cy="20" r="9.500" fill="#fff" />
    <circle cx="20" cy="20" r="7.500" fill="#4d8fe8" />
  </Ico>
);
const ExcelGlyph = () => (
  <Ico w={41} h={38}>
    <path d="M19 4h21v30H19z" fill="#fff" />
    <path d="M22 7h16v24H22z" fill="#1f7a46" />
    <path d="M22 13h16M22 19h16M22 25h16M30 7v24" stroke="#fff" />
    <path d="M0 5 23 0v38L0 33z" fill="#176b3a" />
    <text x="11.500" y="26" textAnchor="middle" fontSize="20" fontWeight="700" fill="#fff" fontFamily="Liberation Sans">
      X
    </text>
  </Ico>
);
const IeGlyph = () => (
  <Ico w={40} h={38}>
    <text x="21" y="32" textAnchor="middle" fontSize="41" fontWeight="700" fill="#35bdf0" fontFamily="Liberation Sans">
      e
    </text>
    <path d="M4 36C0 30 14 8 36 2c2 2 1 8-2 13" stroke="#e5b52e" strokeWidth="2.500" />
  </Ico>
);
const HelpGlyph = () => (
  <Ico w={42} h={38}>
    <circle cx="19" cy="18" r="18.500" fill="#fff" />
    <circle cx="19" cy="18" r="15" fill="#1b9ad6" />
    <text x="19" y="28" textAnchor="middle" fontSize="28" fontWeight="700" fill="#fff" fontFamily="Liberation Sans">
      ?
    </text>
    <circle cx="33" cy="28" r="8.500" fill="#f0a82a" />
    <text x="33" y="34" textAnchor="middle" fontSize="14" fontWeight="700" fill="#fff" fontFamily="Liberation Sans">
      i
    </text>
  </Ico>
);
const ChevronGlyph = () => (
  <Ico w={20} h={12}>
    <path d="m1 11 9-9 9 9" stroke="#ddd" strokeWidth="1.500" />
  </Ico>
);
const AcrobatGlyph = () => (
  <Ico w={28} h={27}>
    <rect x="1" y="1" width="26" height="25" fill="#3a1512" stroke="#b3231c" strokeWidth="2" />
    <path d="M5 21c5-1 9-4 11-8 1-4 4-8 6-5 1 3-3 4-7 4-1 3 3 5 7 5" stroke="#c8b8b4" strokeWidth="2" />
  </Ico>
);
const BatteryGlyph = () => (
  <Ico w={28} h={24}>
    <path d="M2 1v6M7 1v6" stroke="#fff" strokeWidth="1.600" />
    <path d="M0 6h9v5c0 2-2 3-3 3v9H3v-9c-1 0-3-1-3-3z" fill="#fff" />
    <path d="M8 5.500h17v13.500H8" stroke="#fff" strokeWidth="2" />
    <path d="M11 15h12v3H11z" fill="#fff" />
    <path d="M25 9h3v6h-3z" fill="#fff" />
  </Ico>
);
const WifiGlyph = () => (
  <Ico w={24} h={26}>
    <path d="M1 26C1 14 10 3 22 1M7 26c0-9 6-15 14-16M13 26c0-4 3-7 7-8" stroke="#bbb" />
    <circle cx="20" cy="24" r="1.800" fill="#eee" />
  </Ico>
);
const SpeakerGlyph = () => (
  <Ico w={26} h={26}>
    <path d="M1 9h5l6-7v22l-6-7H1z" stroke="#ddd" />
    <path d="M15 8c2 3 2 7 0 10M19 5c3 5 3 11 0 16" stroke="#999" />
    <path d="M23 2c4 7 4 15 0 22" stroke="#666" />
  </Ico>
);
const NotifyGlyph = () => (
  <Ico w={28} h={28}>
    <path d="M1 1h26v20h-9l-4 6-4-6H1z" stroke="#eee" strokeWidth="1.500" />
  </Ico>
);

const CELLS = {
  "4A": {
    kind: "example",
    text: (
      <>
        <Red>範例十三：</Red>王先生跟老K銀行借了20年期，7百萬元的房屋貸款，年利率是9%，月付款，每期支付額
      </>
    ),
  },
  "5A": { kind: "exampleWide", text: "固定，請您做王先生的貸款攤銷表，並繪圖描述各期本金及利息費用變化情形。" },
  "8A": { kind: "purple", text: "1.基本資料" },
  "8I": { kind: "purple", text: "4.繪製本金利息攤還圖" },
  "9B": { kind: "plain", text: "本金" },
  "9C": { kind: "value", pr: 10, text: "7,000,000" },
  "10B": { kind: "plain", text: "貸款年限" },
  "10C": { kind: "value", text: "20" },
  "11B": { kind: "plain", text: "年利率" },
  "11C": { kind: "value", text: "9%" },
  "11D": { kind: "note", text: "可試試看改變此處的利率，看圖形如何變化。" },
  "13A": { kind: "purple", text: "2.計算每期支付額" },
  "14B": { kind: "plain", text: "每期支付額" },
};

const TABS = [
  ["檔案", 102, 7],
  ["常用", 95],
  ["插入", 98],
  ["版面配置", 138],
  ["公式", 100],
  ["資料", 92],
  ["校閱", 102],
  ["檢視", 92],
  ["開發人員", 144],
  ["增益集", 112],
  ["Foxit PDF", 154, 0, true],
  ["ACROBAT", 146, 0, true],
];
const SHEETS = [
  ["08PV4", 96],
  ["9rate", 82.5],
  ["10PMT1", 116.5],
  ["11NPER", 114],
  ["12Mort1", 121.6],
  ["13Mort2", 122.4],
  ["14Mort3", 122],
  ["15GPM", 104],
];

const Foot = ({ label, launcher }) => (
  <GroupFoot>
    <FootLabel>{label}</FootLabel>
    {launcher && (
      <Launcher>
        <LauncherGlyph />
      </Launcher>
    )}
  </GroupFoot>
);

const Big = ({ w, icon, line1, line2 }) => (
  <BigButton $w={w}>
    <BigIcon>{icon}</BigIcon>
    <BigLabel>{line1}</BigLabel>
    <BigLabel>
      {line2}
      <Caret />
    </BigLabel>
  </BigButton>
);

function App() {
  return (
    <Page>
      <GlobalStyle />
      <TitleBar>
        <BarSlot $w={86}>
          <SaveIcon />
        </BarSlot>
        <BarSlot $w={48}>
          <UndoIcon />
        </BarSlot>
        <BarSlot $w={16}>
          <Caret $c="#fff" />
        </BarSlot>
        <BarSlot $w={42} $ml={10}>
          <RedoIcon c="#5d9a7a" />
        </BarSlot>
        <BarSlot $w={22}>
          <Caret $c="#5d9a7a" />
        </BarSlot>
        <BarSlot $w={66}>
          <NewIcon />
        </BarSlot>
        <BarSlot $w={84}>
          <PreviewIcon />
        </BarSlot>
        <BarSlot $w={58}>
          <QatMore />
        </BarSlot>
        <WindowTitle>00 第一章常用的檔案 - Excel</WindowTitle>
        <WindowControls>
          <BarSlot $w={72}>
            <RibbonOptIcon />
          </BarSlot>
          <BarSlot $w={72}>
            <MinIcon />
          </BarSlot>
          <BarSlot $w={74}>
            <RestoreIcon />
          </BarSlot>
          <BarSlot $w={74}>
            <CloseIcon />
          </BarSlot>
        </WindowControls>
      </TitleBar>
      <Recorder>
        <RecLed />
        <RecStatus>Preparing</RecStatus>
        <RecTool $w={28}>
          <MicIcon />
        </RecTool>
        <RecTool $w={26}>
          <CamIcon />
        </RecTool>
        <RecTool $w={26}>
          <RegionIcon />
        </RecTool>
        <RecTool $w={24}>▼</RecTool>
      </Recorder>

      <TabRow>
        {TABS.map(([name, w, mr, latin]) => (
          <Tab key={name} $w={w} $mr={mr} $latin={latin} $on={name === "常用"}>
            {name}
          </Tab>
        ))}
        <TellMe>
          <BulbIcon />
          告訴我您想要執行的動作...
        </TellMe>
        <SignIn $w={60}>登入</SignIn>
        <Share>
          <ShareIcon />
          共用
        </Share>
      </TabRow>

      <Ribbon>
        <Group $w={125}>
          <GroupBody $row>
            <ClipCol $w={78}>
              <PasteIcon>
                <PasteGlyph />
              </PasteIcon>
              <BigLabel $mt={6}>貼上</BigLabel>
              <BigLabel>
                <Caret />
              </BigLabel>
            </ClipCol>
            <ClipCol $w={46}>
              <ClipRow>
                <Slot $w={20} $ml={-1}>
                  <ScissorsGlyph />
                </Slot>
              </ClipRow>
              <ClipRow>
                <Slot $w={20} $ml={-1}>
                  <CopyGlyph />
                </Slot>
                <Caret $ml={11} />
              </ClipRow>
              <ClipRow>
                <Slot $w={24} $ml={-3}>
                  <BrushGlyph />
                </Slot>
              </ClipRow>
            </ClipCol>
          </GroupBody>
          <Foot label="剪貼簿" launcher />
        </Group>

        <Group $w={355}>
          <GroupBody>
            <ToolRow $pl={4}>
              <ComboBox $w={220}>
                新細明體
                <Caret />
              </ComboBox>
              <ComboBox $w={58}>
                12
                <Caret />
              </ComboBox>
              <Slot $w={30}>
                <SizeLetter $s={23}>
                  A<LetterMark $up />
                </SizeLetter>
              </Slot>
              <Slot $w={38}>
                <SizeLetter $s={18} $top={2}>
                  A<LetterMark />
                </SizeLetter>
              </Slot>
            </ToolRow>
            <ToolRow $pl={4}>
              <Slot $w={34}>
                <Letter>B</Letter>
              </Slot>
              <Slot $w={32}>
                <Letter $i $s={25}>
                  I
                </Letter>
              </Slot>
              <Slot $w={36}>
                <Letter $u>U</Letter>
              </Slot>
              <Slot $w={16}>
                <Caret />
              </Slot>
              <Slot $w={28} $ml={13}>
                <BorderGlyph />
              </Slot>
              <Slot $w={20}>
                <Caret />
              </Slot>
              <Slot $w={8}>
                <Sep />
              </Slot>
              <Slot $w={36}>
                <ColorTool>
                  <BucketGlyph />
                  <ColorBar $c="#ffff00" />
                </ColorTool>
              </Slot>
              <Slot $w={12}>
                <Caret />
              </Slot>
              <Slot $w={38}>
                <ColorTool>
                  <ColorLetter>A</ColorLetter>
                  <ColorBar $c="#ff0000" />
                </ColorTool>
              </Slot>
              <Slot $w={10}>
                <Caret />
              </Slot>
              <Slot $w={18}>
                <Sep />
              </Slot>
              <Slot $w={28}>
                <PhoneticMain>中</PhoneticMain>
                <PhoneticSmall>ㄓㄨㄥ</PhoneticSmall>
              </Slot>
              <Slot $w={18}>
                <Caret />
              </Slot>
            </ToolRow>
          </GroupBody>
          <Foot label="字型" launcher />
        </Group>

        <Group $w={342}>
          <GroupBody>
            <ToolRow $pl={4}>
              <Slot $w={34}>
                <AlignV y={[5, 10, 15]} />
              </Slot>
              <Slot $w={34}>
                <AlignV y={[10, 15, 20]} />
              </Slot>
              <Slot $w={34} $on>
                <AlignV y={[15, 20, 25]} />
              </Slot>
              <Slot $w={10}>
                <Sep />
              </Slot>
              <Slot $w={36}>
                <OrientGlyph />
              </Slot>
              <Slot $w={12}>
                <Caret />
              </Slot>
              <Slot $w={12} $ml={20}>
                <Sep />
              </Slot>
              <Slot $w={24} $ml={4}>
                <WrapGlyph />
              </Slot>
              <ToolText $ml={6}>自動換列</ToolText>
            </ToolRow>
            <ToolRow $pl={4}>
              <Slot $w={34}>
                <AlignH />
              </Slot>
              <Slot $w={34}>
                <AlignH />
              </Slot>
              <Slot $w={34}>
                <AlignH />
              </Slot>
              <Slot $w={10}>
                <Sep />
              </Slot>
              <Slot $w={36}>
                <IndentGlyph rev />
              </Slot>
              <Slot $w={32}>
                <IndentGlyph />
              </Slot>
              <Slot $w={12}>
                <Sep />
              </Slot>
              <Slot $w={24} $ml={4}>
                <MergeGlyph />
              </Slot>
              <ToolText $ml={6}>跨欄置中</ToolText>
              <Caret $ml={10} />
            </ToolRow>
          </GroupBody>
          <Foot label="對齊方式" launcher />
        </Group>

        <Group $w={204}>
          <GroupBody>
            <ToolRow $pl={5}>
              <ComboBox $w={194}>
                通用格式
                <Caret />
              </ComboBox>
            </ToolRow>
            <ToolRow $pl={5}>
              <Slot $w={34}>
                <NumberGlyph $b>$</NumberGlyph>
              </Slot>
              <Slot $w={12}>
                <Caret />
              </Slot>
              <Slot $w={38}>
                <NumberGlyph>%</NumberGlyph>
              </Slot>
              <Slot $w={30}>
                <NumberGlyph $b>,</NumberGlyph>
              </Slot>
              <Slot $w={16}>
                <Sep />
              </Slot>
              <Slot $w={28}>
                <DecimalIcon>
                  <DecimalLine>
                    <DecArrow rev />
                    .0
                  </DecimalLine>
                  <DecimalLine>.00</DecimalLine>
                </DecimalIcon>
              </Slot>
              <Slot $w={28} $ml={7}>
                <DecimalIcon>
                  <DecimalLine>.00</DecimalLine>
                  <DecimalLine>
                    <DecArrow />
                    .0
                  </DecimalLine>
                </DecimalIcon>
              </Slot>
            </ToolRow>
          </GroupBody>
          <Foot label="數值" launcher />
        </Group>

        <Group $w={277}>
          <GroupBody $row>
            <Big w={119} icon={<CondGlyph />} line1="設定格式化" line2="的條件" />
            <Big w={80} icon={<TableGlyph />} line1="格式化為" line2="表格" />
            <Big w={78} icon={<CellStyleGlyph />} line1="儲存格" line2="樣式" />
          </GroupBody>
          <Foot label="樣式" />
        </Group>

        <Group $w={206}>
          <GroupBody $row>
            <Big w={76} icon={<InsertGlyph />} line1="插入" />
            <Big w={56} icon={<DeleteGlyph />} line1="刪除" />
            <Big w={74} icon={<FormatGlyph />} line1="格式" />
          </GroupBody>
          <Foot label="儲存格" />
        </Group>

        <Group $w={329}>
          <GroupBody $row>
            <SmallStack>
              <SmallButton>
                <SmallIcon>
                  <Sigma>Σ</Sigma>
                </SmallIcon>
                自動加總
                <Caret $ml={10} />
              </SmallButton>
              <SmallButton>
                <SmallIcon>
                  <FillGlyph />
                </SmallIcon>
                填滿
                <Caret $ml={6} />
              </SmallButton>
              <SmallButton>
                <SmallIcon>
                  <EraserGlyph />
                </SmallIcon>
                清除
                <Caret $ml={6} />
              </SmallButton>
            </SmallStack>
            <Big w={90} icon={<SortGlyph />} line1="排序與篩選" />
            <Big w={88} icon={<FindGlyph />} line1="尋找與" line2="選取" />
          </GroupBody>
          <Foot label="編輯" />
        </Group>
        <Collapse>
          <CollapseGlyph />
        </Collapse>
      </Ribbon>

      <FormulaBar>
        <NameBox>
          D6
          <Caret />
        </NameBox>
        <GripDots>
          <i />
          <i />
          <i />
        </GripDots>
        <FxBox>
          <FxSlot $w={62}>
            <CrossGlyph />
          </FxSlot>
          <FxSlot $w={64}>
            <CheckGlyph />
          </FxSlot>
          <FxSlot $w={62}>
            <FxText>fx</FxText>
          </FxSlot>
        </FxBox>
        <FormulaInput>
          <FormulaChevron />
        </FormulaInput>
      </FormulaBar>

      <SheetRow>
        <Sheet>
          <Corner>
            <CornerMark />
          </Corner>
          {COL_NAMES.map((c) => (
            <ColHead key={c}>{c}</ColHead>
          ))}
          {ROW_H.map((h, r) => (
            <React.Fragment key={r}>
              <RowHead>{r + 1}</RowHead>
              {COL_NAMES.map((c) => {
                const cell = CELLS[`${r + 1}${c}`];
                return (
                  <Cell key={c} $kind={cell?.kind} $pr={cell?.pr}>
                    {cell?.text}
                  </Cell>
                );
              })}
            </React.Fragment>
          ))}
          <Banner>
            學習重點：
            <br />
            學習製作貸款攤銷表並藉由繪圖了解貸款期間本金與利息攤還之狀況。
          </Banner>
          <Picked />
          <Chart>
            <ChartTitle>利息本金攤還圖</ChartTitle>
            <Plot>
              <AxisLabels>
                <span>$1</span>
                <span>$1</span>
                <span>$1</span>
                <span>$1</span>
              </AxisLabels>
              <Axis />
            </Plot>
            <Legend>
              <LegendLine />月
            </Legend>
          </Chart>
        </Sheet>
        <VScroll>
          <ScrollBtn>
            <Arrow $d="up" />
          </ScrollBtn>
          <VThumb />
          <VTrack />
          <ScrollBtn>
            <Arrow $d="down" />
          </ScrollBtn>
        </VScroll>
      </SheetRow>

      <TabStrip>
        <NavSlot $w={64}>
          <Arrow $d="left" $c="#217346" />
        </NavSlot>
        <NavSlot $w={10}>
          <Arrow $d="right" $c="#c4c4c4" />
        </NavSlot>
        <NavSlot $w={47}>...</NavSlot>
        {SHEETS.map(([name, w], i) => (
          <SheetTab key={name} $w={w} $first={i === 0} $on={name === "13Mort2"}>
            {name}
          </SheetTab>
        ))}
        <AddSheet>+</AddSheet>
        <TabGrip>
          <i />
          <i />
          <i />
        </TabGrip>
        <HScroll>
          <ScrollBtn $w={29}>
            <Arrow $d="left" />
          </ScrollBtn>
          <HThumb />
          <Filler />
          <ScrollBtn $w={29}>
            <Arrow $d="right" />
          </ScrollBtn>
        </HScroll>
      </TabStrip>

      <StatusBar>
        <StatusLabel>就緒</StatusLabel>
        <Slot $w={20} $ml={25}>
          <MacroGlyph />
        </Slot>
        <StatusRight>
          <ViewBtn $on>
            <NormalView />
          </ViewBtn>
          <ViewBtn>
            <LayoutView />
          </ViewBtn>
          <ViewBtn>
            <BreakView />
          </ViewBtn>
          <ZoomSign $w={26}>−</ZoomSign>
          <ZoomTrack>
            <ZoomThumb />
          </ZoomTrack>
          <ZoomSign $w={28}>+</ZoomSign>
          <ZoomText>100%</ZoomText>
        </StatusRight>
      </StatusBar>

      <Taskbar>
        <TaskItem $w={84}>
          <WinLogo />
        </TaskItem>
        <TaskItem $w={84}>
          <SearchGlyph />
        </TaskItem>
        <TaskSep />
        <TaskItem>
          <FolderGlyph />
        </TaskItem>
        <TaskItem $ml={15}>
          <StoreGlyph />
        </TaskItem>
        <TaskItem $ml={16} $w={71} $on>
          <ChromeGlyph />
        </TaskItem>
        <TaskItem $ml={16} $w={71.5} $on>
          <ExcelGlyph />
        </TaskItem>
        <TaskItem $ml={16} $w={71}>
          <IeGlyph />
        </TaskItem>
        <Tray>
          <TaskItem $w={48}>
            <HelpGlyph />
          </TaskItem>
          <TaskItem $w={54}>
            <ChevronGlyph />
          </TaskItem>
          <TaskItem $w={30}>
            <AcrobatGlyph />
          </TaskItem>
          <TaskItem $w={54}>
            <BatteryGlyph />
          </TaskItem>
          <TaskItem $w={34}>
            <WifiGlyph />
          </TaskItem>
          <TaskItem $w={44}>
            <SpeakerGlyph />
          </TaskItem>
          <TaskItem $w={64}>
            <TrayText>繁體</TrayText>
          </TaskItem>
          <TaskItem $w={124}>
            <Clock>
              <span>上午 09:51</span>
              <span>2017/9/25</span>
            </Clock>
          </TaskItem>
          <TaskItem $w={72}>
            <NotifyGlyph />
          </TaskItem>
        </Tray>
        <EdgeLine />
      </Taskbar>
    </Page>
  );
}

export default App;
